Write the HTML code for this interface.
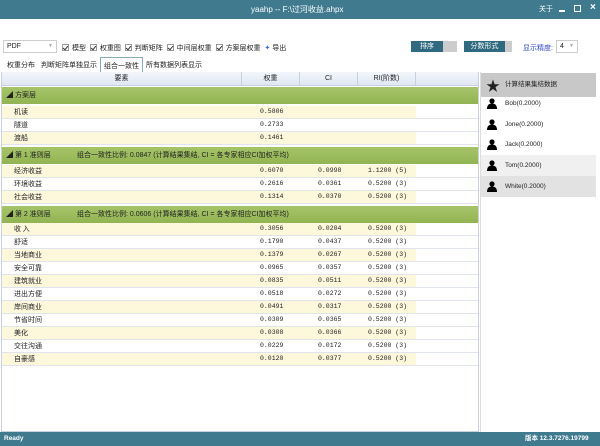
<!DOCTYPE html>
<html><head><meta charset="utf-8"><style>
*{margin:0;padding:0;box-sizing:border-box}
body{width:600px;height:446px;overflow:hidden;background:#fff;font-family:"Liberation Sans","Noto Sans CJK SC",sans-serif;font-size:7px;color:#222;position:relative}
.abs{position:absolute}
.title{left:0;top:0;width:600px;height:19px;background:#3f7a8f;color:#fff;font-size:8px}
.cb{display:inline-block;width:7px;height:7px;border:1px solid #999;margin-right:3px;vertical-align:-1px;position:relative}
.cb:after{content:"";position:absolute;left:1px;top:0;width:2px;height:4px;border:solid #333;border-width:0 1px 1px 0;transform:rotate(40deg)}
.row{position:absolute;left:2px;width:476px;height:13px;border-bottom:1px solid #dfe4ee;background:#fff}
.row.y .bg{position:absolute;left:0;top:0;width:414px;height:12px;background:#fdf7dc}
.row span{position:absolute;top:0;line-height:12px;font-family:"Liberation Mono","Noto Sans CJK SC",monospace;font-size:6.5px}
.row span:first-of-type{font-family:"Noto Sans CJK SC",sans-serif;font-size:7px}
.grp{position:absolute;left:2px;width:476px;height:17px;background:linear-gradient(#a6c46a,#92b451);color:#222;font-size:7px}
.grp span{position:absolute;top:0;line-height:17px}
.hd{position:absolute;top:72px;height:14px;background:linear-gradient(#f3f6fb,#dfe7f3);border-right:1px solid #c5d0e0;border-bottom:1px solid #c5d0e0;text-align:center;line-height:14px;font-size:7px}
.usr{position:absolute;left:481px;width:115px;height:21px;font-size:6.5px}
.usr i{position:absolute;left:6px;top:5px;width:10px;height:11px}
.usr b{position:absolute;left:24px;top:0;line-height:21px;font-weight:normal}
</style></head><body>
<div class="abs title"><span class="abs" style="left:251px;top:0;line-height:19px">yaahp -- F:\过河收益.ahpx</span>
<span class="abs" style="left:539px;top:0;line-height:19px;font-size:7px">关于</span>
<span class="abs" style="left:559px;top:10px;width:6px;height:1.5px;background:#fff"></span>
<span class="abs" style="left:574px;top:5px;width:7px;height:7px;border:1.5px solid #fff"></span>
<span class="abs" style="left:590px;top:2px;font-size:10px;font-weight:bold">×</span></div>
<div class="abs" style="left:3px;top:40px;width:54px;height:13px;border:1px solid #ccc;font-size:7px;padding:2px 3px">PDF<span style="float:right;color:#aaa;font-size:5px">▼</span></div>
<div class="abs" style="left:62px;top:43px;font-size:7px;white-space:nowrap"><span class="cb"></span>模型 &nbsp;<span class="cb"></span>权重图 &nbsp;<span class="cb"></span>判断矩阵 &nbsp;<span class="cb"></span>中间层权重 &nbsp;<span class="cb"></span>方案层权重 &nbsp;<span style="color:#36c">✦</span> 导出</div>
<div class="abs" style="left:411px;top:41px;width:46px;height:11px;background:#ccc"><div style="width:32px;height:11px;background:#2f6a80;color:#fff;text-align:center;font-size:7px;line-height:11px">排序</div></div>
<div class="abs" style="left:464px;top:41px;width:48px;height:11px;background:#ccc;overflow:hidden"><div style="width:41px;height:11px;background:#2f6a80;color:#fff;text-align:center;font-size:7px;line-height:11px">分数形式</div></div>
<div class="abs" style="left:523px;top:43px;color:#3344cc;font-size:7px">显示精度:</div>
<div class="abs" style="left:556px;top:40px;width:22px;height:13px;border:1px solid #ccc;font-size:7px;padding:2px 3px">4<span style="float:right;color:#aaa;font-size:5px">▼</span></div>
<div class="abs" style="left:7px;top:60px;font-size:7px">权重分布</div>
<div class="abs" style="left:41px;top:60px;font-size:7px">判断矩阵单独显示</div>
<div class="abs" style="left:100px;top:57px;width:43px;height:16px;border:1px solid #8ab;border-bottom:none;background:#fff;font-size:7px;padding:3px 3px">组合一致性</div>
<div class="abs" style="left:146px;top:60px;font-size:7px">所有数据列表显示</div>
<div class="abs" style="left:1px;top:72px;width:478px;height:360px;border:1px solid #c8d2e0;background:#fff"></div>
<div class="hd" style="left:2px;width:240px">要素</div>
<div class="hd" style="left:242px;width:58px">权重</div>
<div class="hd" style="left:300px;width:58px">CI</div>
<div class="hd" style="left:358px;width:58px">RI(阶数)</div>
<div class="hd" style="left:416px;width:62px;border-right:none"></div>

<div class="grp" style="top:87px"><span style="left:4px">◢ 方案层</span></div>
<div class="row y" style="top:106px"><div class="bg"></div><span style="left:12px">机读</span><span style="left:258px">0.5806</span></div>
<div class="row" style="top:119px"><span style="left:12px">隧道</span><span style="left:258px">0.2733</span></div>
<div class="row y" style="top:132px"><div class="bg"></div><span style="left:12px">渡船</span><span style="left:258px">0.1461</span></div>

<div class="grp" style="top:147px"><span style="left:4px">◢ 第 1 准则层</span><span style="left:75px">组合一致性比例: 0.0847 (计算结果集结, CI = 各专家相应CI加权平均)</span></div>
<div class="row y" style="top:165px"><div class="bg"></div><span style="left:12px">经济收益</span><span style="left:258px">0.6070</span><span style="left:316px">0.0998</span><span style="left:366px">1.1200 (5)</span></div>
<div class="row" style="top:178px"><span style="left:12px">环境收益</span><span style="left:258px">0.2616</span><span style="left:316px">0.0361</span><span style="left:366px">0.5200 (3)</span></div>
<div class="row y" style="top:191px"><div class="bg"></div><span style="left:12px">社会收益</span><span style="left:258px">0.1314</span><span style="left:316px">0.0370</span><span style="left:366px">0.5200 (3)</span></div>

<div class="grp" style="top:206px"><span style="left:4px">◢ 第 2 准则层</span><span style="left:75px">组合一致性比例: 0.0606 (计算结果集结, CI = 各专家相应CI加权平均)</span></div>
<div class="row y" style="top:223px"><div class="bg"></div><span style="left:12px">收 入</span><span style="left:258px">0.3056</span><span style="left:316px">0.0204</span><span style="left:366px">0.5200 (3)</span></div>
<div class="row" style="top:236px"><span style="left:12px">舒适</span><span style="left:258px">0.1790</span><span style="left:316px">0.0437</span><span style="left:366px">0.5200 (3)</span></div>
<div class="row y" style="top:249px"><div class="bg"></div><span style="left:12px">当地商业</span><span style="left:258px">0.1379</span><span style="left:316px">0.0267</span><span style="left:366px">0.5200 (3)</span></div>
<div class="row" style="top:262px"><span style="left:12px">安全可靠</span><span style="left:258px">0.0965</span><span style="left:316px">0.0357</span><span style="left:366px">0.5200 (3)</span></div>
<div class="row y" style="top:275px"><div class="bg"></div><span style="left:12px">建筑就业</span><span style="left:258px">0.0835</span><span style="left:316px">0.0511</span><span style="left:366px">0.5200 (3)</span></div>
<div class="row" style="top:288px"><span style="left:12px">进出方便</span><span style="left:258px">0.0518</span><span style="left:316px">0.0272</span><span style="left:366px">0.5200 (3)</span></div>
<div class="row y" style="top:301px"><div class="bg"></div><span style="left:12px">岸间商业</span><span style="left:258px">0.0491</span><span style="left:316px">0.0317</span><span style="left:366px">0.5200 (3)</span></div>
<div class="row" style="top:314px"><span style="left:12px">节省时间</span><span style="left:258px">0.0309</span><span style="left:316px">0.0365</span><span style="left:366px">0.5200 (3)</span></div>
<div class="row y" style="top:327px"><div class="bg"></div><span style="left:12px">美化</span><span style="left:258px">0.0308</span><span style="left:316px">0.0366</span><span style="left:366px">0.5200 (3)</span></div>
<div class="row" style="top:340px"><span style="left:12px">交往沟通</span><span style="left:258px">0.0229</span><span style="left:316px">0.0172</span><span style="left:366px">0.5200 (3)</span></div>
<div class="row y" style="top:353px"><div class="bg"></div><span style="left:12px">自豪感</span><span style="left:258px">0.0120</span><span style="left:316px">0.0377</span><span style="left:366px">0.5200 (3)</span></div>

<div class="abs" style="left:480px;top:72px;width:118px;height:360px;border-left:1px solid #ddd;background:#fff"></div>
<div class="usr" style="top:73px;height:24px;background:#c8c8c8"><span class="abs" style="left:5px;top:3px;font-size:14px">★</span><b style="line-height:24px">计算结果集结数据</b></div>
<svg width="0" height="0" style="position:absolute"><defs><symbol id="u" viewBox="0 0 10 11"><circle cx="5" cy="3" r="2.6"/><path d="M0 11 Q0 5.5 5 5.5 Q10 5.5 10 11Z"/></symbol></defs></svg>
<div class="usr" style="top:93px"><i><svg width="10" height="11"><use href="#u"/></svg></i><b>Bob(0.2000)</b></div>
<div class="usr" style="top:114px"><i><svg width="10" height="11"><use href="#u"/></svg></i><b>Jone(0.2000)</b></div>
<div class="usr" style="top:134px"><i><svg width="10" height="11"><use href="#u"/></svg></i><b>Jack(0.2000)</b></div>
<div class="usr" style="top:155px;background:#f0f0f0"><i><svg width="10" height="11"><use href="#u"/></svg></i><b>Tom(0.2000)</b></div>
<div class="usr" style="top:176px;background:#e2e2e2"><i><svg width="10" height="11"><use href="#u"/></svg></i><b>White(0.2000)</b></div>

<div class="abs" style="left:0;top:432px;width:600px;height:14px;background:#3f7a8f;color:#fff;font-size:6.5px;font-weight:bold"><span class="abs" style="left:4px;top:0;line-height:14px">Ready</span><span class="abs" style="left:525px;top:0;line-height:14px">版本 12.3.7276.19799</span></div>
</body></html>
